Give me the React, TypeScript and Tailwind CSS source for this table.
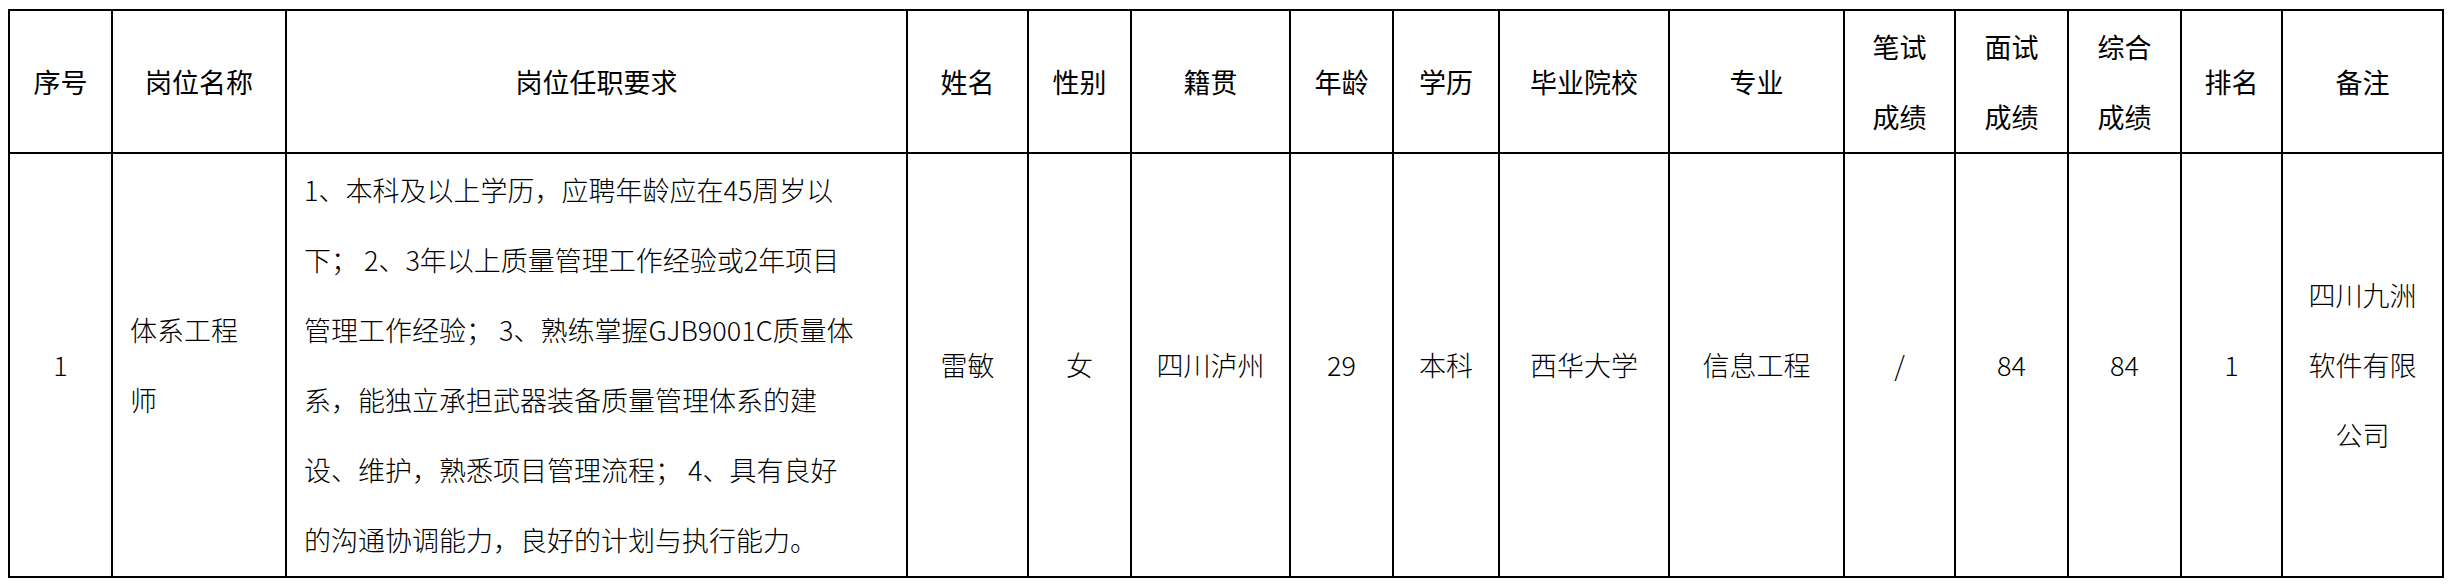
import React from "react";

const font = { fontFamily: '"Noto Sans CJK SC", "Noto Sans", sans-serif' };

const headers: { label: string[]; w: string }[] = [
  { label: ["序号"], w: "w-[103px]" },
  { label: ["岗位名称"], w: "w-[174px]" },
  { label: ["岗位任职要求"], w: "w-[621px]" },
  { label: ["姓名"], w: "w-[121px]" },
  { label: ["性别"], w: "w-[103px]" },
  { label: ["籍贯"], w: "w-[159px]" },
  { label: ["年龄"], w: "w-[103px]" },
  { label: ["学历"], w: "w-[106px]" },
  { label: ["毕业院校"], w: "w-[170px]" },
  { label: ["专业"], w: "w-[175px]" },
  { label: ["笔试", "成绩"], w: "w-[111px]" },
  { label: ["面试", "成绩"], w: "w-[113px]" },
  { label: ["综合", "成绩"], w: "w-[113px]" },
  { label: ["排名"], w: "w-[101px]" },
  { label: ["备注"], w: "w-[161px]" },
];

const reqLines = [
  "1、本科及以上学历，应聘年龄应在45周岁以",
  "下； 2、3年以上质量管理工作经验或2年项目",
  "管理工作经验； 3、熟练掌握GJB9001C质量体",
  "系，能独立承担武器装备质量管理体系的建",
  "设、维护，熟悉项目管理流程； 4、具有良好",
  "的沟通协调能力，良好的计划与执行能力。",
];

const cell = "border-2 border-black align-middle p-0";
const body = `${cell} font-light`;

export default function App() {
  return (
    <div className="bg-white w-[2451px] h-[587px] pt-[9px] pl-[8px] text-black" style={font}>
      <table className="border-collapse table-fixed w-[2436px] text-[27px] leading-[70px]">
        <thead>
          <tr className="h-[143px]">
            {headers.map((h, i) => (
              <th key={i} className={`${cell} ${h.w} font-normal text-center`}>
                {h.label.map((l, j) => (
                  <div key={j} className="whitespace-nowrap">
                    {l}
                  </div>
                ))}
              </th>
            ))}
          </tr>
        </thead>
        <tbody>
          <tr className="h-[424px]">
            <td className={`${body} text-center`}>1</td>
            <td className={`${body} text-left pl-[17px]`}>
              <div>体系工程</div>
              <div>师</div>
            </td>
            <td className={`${body} text-left pl-[17px]`}>
              {reqLines.map((l, i) => (
                <div key={i} className="whitespace-pre">
                  {l}
                </div>
              ))}
            </td>
            <td className={`${body} text-center`}>雷敏</td>
            <td className={`${body} text-center`}>女</td>
            <td className={`${body} text-center`}>四川泸州</td>
            <td className={`${body} text-center`}>29</td>
            <td className={`${body} text-center`}>本科</td>
            <td className={`${body} text-center`}>西华大学</td>
            <td className={`${body} text-center`}>信息工程</td>
            <td className={`${body} text-center`}>/</td>
            <td className={`${body} text-center`}>84</td>
            <td className={`${body} text-center`}>84</td>
            <td className={`${body} text-center`}>1</td>
            <td className={`${body} text-center`}>
              <div>四川九洲</div>
              <div>软件有限</div>
              <div>公司</div>
            </td>
          </tr>
        </tbody>
      </table>
    </div>
  );
}
